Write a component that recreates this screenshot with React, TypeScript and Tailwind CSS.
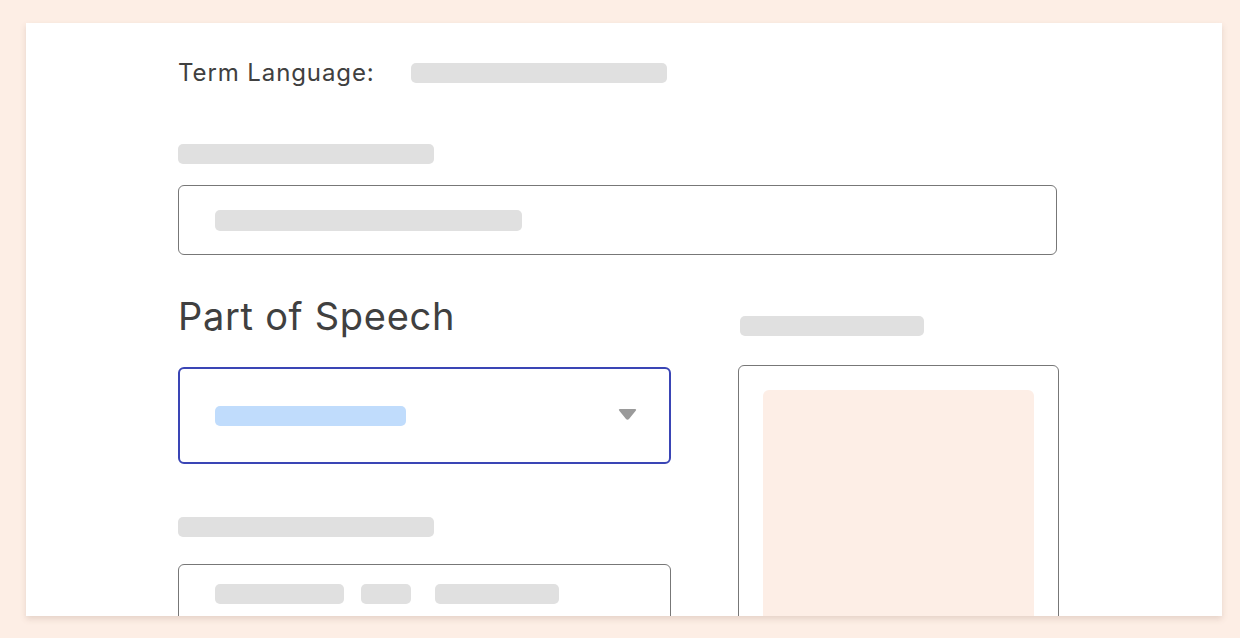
import React from "react"

// grey placeholder bar standing in for text
function Bar({ className = "" }: { className?: string }) {
  return <div className={`h-[20px] rounded-[5px] bg-[#e0e0e0] ${className}`} />
}

export default function App() {
  return (
    <div
      className="h-[638px] overflow-hidden bg-[#fdeee5] pl-[26px] pt-[23px] text-[#404040]"
      style={{ fontFamily: "Inter, 'Noto Sans', sans-serif" }}
    >
      <div className="h-[593px] w-[1196px] overflow-hidden bg-white shadow-[0_3px_6px_rgba(120,90,70,0.18)]">
        <div className="ml-[152px] w-[881px] pt-[34px]">
          {/* term language */}
          <div className="flex h-[32px] items-center">
            <span className="w-[233px] text-[24px] leading-[32px] tracking-[0.9px]">Term Language:</span>
            <Bar className="w-[256px]" />
          </div>

          {/* term field */}
          <Bar className="mt-[55px] w-[256px]" />
          <div className="mt-[21px] flex h-[70px] w-[879px] items-center rounded-[6px] border border-[#777] pl-[36px]">
            <Bar className="h-[21px] w-[307px]" />
          </div>

          <div className="mt-[41px] flex gap-[67px]">
            {/* left column */}
            <div className="w-[493px]">
              <h2 className="text-[38px] font-normal leading-[40px] tracking-[0.7px]">Part of Speech</h2>
              <div className="mt-[31px] flex h-[97px] items-center justify-between rounded-[6px] border-2 border-[#3a45b5] pl-[35px] pr-[32px]">
                <div className="h-[20px] w-[191px] rounded-[5px] bg-[#c0dcfc]" />
                <svg width="19" height="13" viewBox="0 0 19 13" className="-mt-[3px]">
                  <path d="M2 1 H17 Q19 1 17.5 3 L11 11 Q9.5 12.5 8 11 L1.5 3 Q0 1 2 1 Z" fill="#9a9a9a" />
                </svg>
              </div>

              <Bar className="mt-[53px] w-[256px]" />
              <div className="mt-[27px] flex h-[120px] items-start gap-[17px] rounded-[6px] border border-[#777] pl-[36px] pt-[19px]">
                <Bar className="w-[129px]" />
                <Bar className="w-[50px] rounded-[3px]" />
                <Bar className="ml-[7px] w-[124px]" />
              </div>
            </div>

            {/* right column */}
            <div className="w-[321px] pt-[20px]">
              <Bar className="ml-[2px] w-[184px]" />
              <div className="mt-[29px] h-[320px] rounded-[6px] border border-[#777] p-[24px]">
                <div className="h-[300px] rounded-[6px] bg-[#fdeee6]" />
              </div>
            </div>
          </div>
        </div>
      </div>
    </div>
  )
}
